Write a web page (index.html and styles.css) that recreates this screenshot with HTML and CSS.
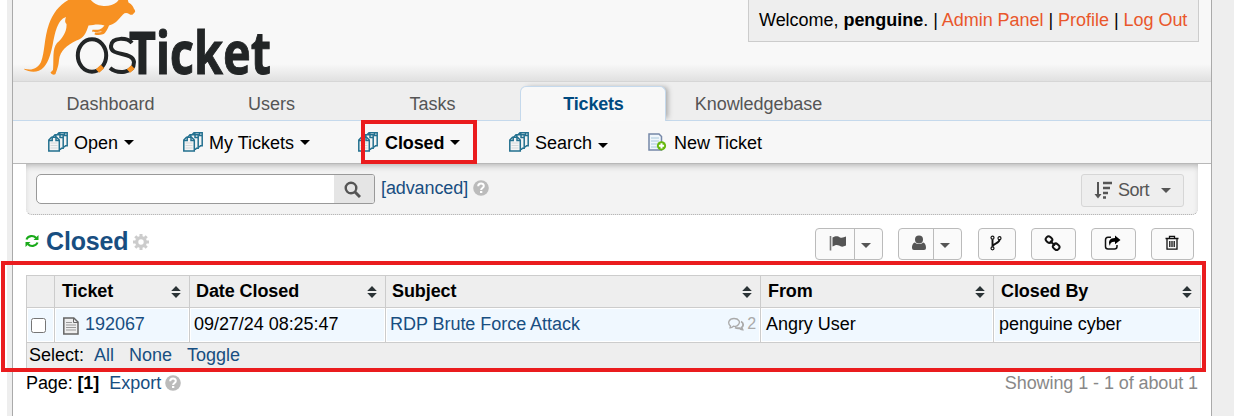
FILE: index.html
```
<!DOCTYPE html>
<html lang="en">
<head>
<meta charset="utf-8">
<title>osTicket :: Closed</title>
<link rel="stylesheet" href="styles.css">
</head>
<body>
<svg class="defs" width="0" height="0" aria-hidden="true">
  <symbol id="queue" viewBox="0 0 20 20">
    <g stroke="#23708f" stroke-width="1.500" fill="#f4f4f4">
      <path d="M11 .8h8.200v13h-1.700l-1 1H8.500V3.300z"/><path d="M11.800 1v2.500H9M16.500 1v2.500H19" fill="none"/>
      <path d="M7 2.800h8.200v13.500h-1.700l-1 1H4.500V5.500z"/><path d="M7.800 3v3H5M12 3v2.500h3" fill="none"/>
      <path d="M3.500 5.300h5L11.300 8v11H.8V8z"/><path d="M4.200 5.500v3H1M8 5.500v3h3" fill="none"/>
    </g>
    <path d="M2.500 11h7M2.500 13.500h7M2.500 16h7" stroke="#d4d8da"/>
  </symbol>
  <symbol id="help" viewBox="0 0 16 16"><circle cx="8" cy="8" r="7.8" fill="#bbb"/><path d="M5.200 6.200c0-3.700 5.800-3.500 5.600-.2 0 2-2.600 2-2.700 4" fill="none" stroke="#fff" stroke-width="2"/><path d="M7 11h2.300v2H7z" fill="#fff"/></symbol>
  <symbol id="sorter" viewBox="0 0 10 12"><path d="M5 0l4.800 5H.2zM5 12l4.800-5H.2z" fill="#2b3336"/></symbol>
  <symbol id="caret" viewBox="0 0 10 5"><path d="M0 0h10L5 5z" fill="currentColor"/></symbol>
</svg>
<div class="page">
  <header class="header">
    <svg class="logo" width="250" height="78" viewBox="0 0 250 78">
      <path fill="#f79122" d="M.3 68.700C7 70.500 13 69.500 17 62C21 52 20 38 25 24C29 13 35 5 46-1L66-1C69 3 73 5.500 78 5.800C84 6.500 89 5 93 2L97-3L103-3L104.500 2.500C108 4.500 109.500 7 110 9C112 11 111 12.500 110 13C109 15 107 15.200 105.500 14.300C103 12.700 101 12.500 99 14.500C93 21 91 24 85 25.500C84 28 82 33 79 34.300C76 35.300 73 35.300 70.500 34.500L71 32.500L76.500 32.300L78 31C74 32.500 70 32 68 31.500L68.500 29.800L74 29.800C78 29 79 27 80.500 25.500C75 23.500 69 25 64.500 25.500C62 33 60 38 52.500 40.500C43 45 36 51 35 60C34.500 66 33.500 68 31.500 74C30 75.500 27.500 74.500 26.500 72.500L29 70C30 59 28 49 33 43C39 38 43 31 42.500 24C40.500 22 41 20 42 17C33 20 31 34 29 43C27 53 25 61 20 67C14 74 5 72 .3 69.500z"/>
      <g fill="none" stroke="#222526" stroke-width="4">
        <ellipse cx="68" cy="55.500" rx="14.200" ry="16.200"/>
        <path d="M108 43C104 38 88 36 87 46C86 57 109 51 110 62C110 74 93 74 86 68"/>
      </g>
      <path d="M73.500 71l5-4.500M104.500 71l4.500-4" stroke="#f79122" stroke-width="5"/>
      <text class="wordmark" x="105" y="73.500" textLength="142" lengthAdjust="spacingAndGlyphs">Ticket</text>
    </svg>
    <p class="welcome">Welcome, <strong>penguine</strong>. | <a>Admin Panel</a> | <a>Profile</a> | <a>Log Out</a></p>
  </header>
  <nav class="tabs"><a>Dashboard</a><a>Users</a><a>Tasks</a><a class="active">Tickets</a><a class="wide">Knowledgebase</a></nav>
  <nav class="subnav">
    <a><svg class="qi"><use href="#queue"/></svg><span>Open</span><svg class="caret"><use href="#caret"/></svg></a>
    <a><svg class="qi"><use href="#queue"/></svg><span>My Tickets</span><svg class="caret"><use href="#caret"/></svg></a>
    <a class="current"><svg class="qi"><use href="#queue"/></svg><span>Closed</span><svg class="caret"><use href="#caret"/></svg><i class="mark-queue"></i></a>
    <a><svg class="qi"><use href="#queue"/></svg><span>Search</span><svg class="caret low"><use href="#caret"/></svg></a>
    <a><svg class="qi" viewBox="0 0 20 20"><path d="M1 2h10l2.500 2.500V18H1z" fill="#eff6fb" stroke="#7688a8" stroke-width="1.500"/><path d="M3 6h8M3 9h8M3 12h7M3 15h6" stroke="#a8c8dc"/><circle cx="13.500" cy="13.800" r="4.600" fill="#65b80b"/><path d="M13.500 11.200v5.200M10.900 13.800h5.200" stroke="#fff" stroke-width="2"/></svg><span>New Ticket</span></a>
  </nav>
  <main>
    <section class="searchbar">
      <div class="search"><span class="field"></span><button class="go" aria-label="Search"><svg width="17" height="17" viewBox="0 0 17 17" fill="none" stroke="#555"><circle cx="7" cy="7" r="5.300" stroke-width="2.400"/><path d="M11 11l5 5" stroke-width="3"/></svg></button></div>
      <a class="advanced">[advanced]</a><svg class="help"><use href="#help"/></svg>
      <button class="sort"><svg width="18" height="18" viewBox="0 0 18 18" fill="none" stroke="#555"><path d="M4 1v14" stroke-width="2"/><path d="M.5 13h7L4 17.500z" fill="#555" stroke="none"/><path d="M9 2h9M9 7h7M9 12h5M9 16.500h3" stroke-width="2.600"/></svg><span>Sort</span><svg class="caret"><use href="#caret"/></svg></button>
    </section>
    <section class="titlebar">
      <svg class="refresh" width="14" height="14" viewBox="0 0 14 14" fill="none" stroke="#1aaa1a" stroke-width="2.100"><path d="M1.500 5.500C3 1.500 8.500 1 11.200 4M12.500 8.500C11 12.500 5.500 13 2.800 10"/><path d="M13.500 1v5h-5zM.5 13V8h5z" fill="#1aaa1a" stroke="none"/></svg>
      <h1>Closed</h1>
      <svg class="gear" width="16" height="16" viewBox="0 0 16 16"><g fill="none" stroke="#ccc"><circle cx="8" cy="8" r="4.300" stroke-width="3.200"/><path d="M8 0v3M8 13v3M0 8h3M13 8h3M2.300 2.300l2 2M11.700 11.700l2 2M2.300 13.700l2-2M11.700 4.300l2-2" stroke-width="3"/></g></svg>
      <div class="actions">
        <button class="split b1"><span><svg width="18" height="16" viewBox="0 0 18 16"><path d="M1.500 1v14.500" stroke="#777" stroke-width="1.600"/><path d="M3.500 2.500C7 .5 9 1 11 2.500C13 3 15 2.500 17 1.500V10.500C14 12 12 12 10 10.500C8 9.500 6 10 3.500 11.500z" fill="#555"/></svg></span><span><svg class="caret"><use href="#caret"/></svg></span></button>
        <button class="split b2"><span><svg width="14" height="16" viewBox="0 0 14 16" fill="#555"><circle cx="7" cy="4.500" r="4"/><path d="M3 7.500C5 9.500 9 9.500 11 7.500C13.500 8 14 11 14 13Q14 15 12 15H2Q0 15 0 13C0 11 .5 8 3 7.500z"/></svg></span><span><svg class="caret"><use href="#caret"/></svg></span></button>
        <button class="b3"><svg width="12" height="16" viewBox="0 0 12 16" fill="none" stroke="#111" stroke-width="1.200"><circle cx="2.500" cy="2.700" r="1.500"/><circle cx="9.500" cy="3.200" r="1.500"/><circle cx="2.500" cy="13.300" r="1.500"/><path d="M2.500 4.200v7.500M9.500 4.800C9.500 8.500 3 8 2.700 11.500" stroke-width="1.900"/></svg></button>
        <button class="b4"><svg width="17" height="16" viewBox="0 0 17 16" fill="none" stroke="#111" stroke-width="2"><rect x="1.800" y="1.600" width="6.500" height="5.600" rx="2.500" transform="rotate(42 4.800 4.400)"/><rect x="9" y="8.800" width="6.500" height="5.600" rx="2.500" transform="rotate(42 12 11.600)"/><path d="M6 6l5 4.500"/></svg></button>
        <button class="b5"><svg width="17" height="16" viewBox="0 0 17 16"><path d="M7 2.200H4Q1.500 2.200 1.500 5v6.500Q1.500 14 4 14h6.500Q13 14 13 11.500V10" fill="none" stroke="#111" stroke-width="1.500"/><path d="M11 .5l5.500 4.500L11 9.300V6.800C8 6.500 6 7.500 6 11C3.500 6.500 6 3 11 3z" fill="#000"/></svg></button>
        <button class="b6"><svg width="14" height="16" viewBox="0 0 14 16" fill="none" stroke="#111" stroke-width="1.300"><path d="M.5 3.500h13M4.500 3V1.300h5V3M2 3.500v10.700h10V3.500M4.800 6v6M7 6v6M9.200 6v6"/></svg></button>
      </div>
    </section>
    <section class="table">
      <div class="row head">
        <span></span>
        <span>Ticket<svg class="sorter"><use href="#sorter"/></svg></span>
        <span>Date Closed<svg class="sorter"><use href="#sorter"/></svg></span>
        <span>Subject<svg class="sorter"><use href="#sorter"/></svg></span>
        <span>From<svg class="sorter"><use href="#sorter"/></svg></span>
        <span>Closed By<svg class="sorter"><use href="#sorter"/></svg></span>
      </div>
      <div class="row data">
        <span><input type="checkbox"></span>
        <span><svg class="doc" width="16" height="18" viewBox="0 0 16 18"><path d="M.8 1h10L15 5v12H.8z" fill="#eee" stroke="#666" stroke-width="1.500"/><path d="M10.500 1v4.500H15" fill="none" stroke="#666"/><path d="M3 5.500h6M3 8h10M3 10.500h10M3 13h10" stroke="#999"/></svg><a>192067</a></span>
        <span>09/27/24 08:25:47</span>
        <span><a>RDP Brute Force Attack</a><small><svg width="16" height="14" viewBox="0 0 16 14" fill="none" stroke="#aaa" stroke-width="1.300"><path d="M2.500 9C-1 6 1 1.500 6 1.500S12.500 5 10.500 7.500S6 9.500 5.500 9.200Q4 10.800 2 10.800z"/><path d="M13 4.500C16 6 15.500 9.500 13.500 10.500L14.500 12.500Q12.500 12.500 11.500 11.200Q8.500 11.500 7 10.500" stroke-width="1.800"/></svg>2</small></span>
        <span>Angry User</span>
        <span>penguine cyber</span>
      </div>
      <div class="foot"><span>Select:</span><a>All</a><a>None</a><a>Toggle</a></div>
      <i class="mark-table"></i>
    </section>
    <footer class="pager"><span>Page: <strong>[1]</strong></span><a>Export</a><svg class="help"><use href="#help"/></svg><span class="showing">Showing 1 - 1 of about 1</span></footer>
  </main>
</div>
</body>
</html>
```
FILE: styles.css
```
* { box-sizing: border-box; }
body { margin: 0; height: 416px; overflow: hidden; padding: 0 22px 0 7px; background: linear-gradient(90deg, #fff 7px, #eee 7px); font: 18px/20px "Liberation Sans", Arial, sans-serif; color: #000; }
svg { display: block; flex: none; }
.defs { position: absolute; }
a { color: #184e81; white-space: nowrap; }
button { font: inherit; padding: 0; }
.page { width: 1200px; height: 416px; margin-left: 5px; border: solid #aaa; border-width: 0 1px; background: #fff; }
.header { height: 82px; display: flex; justify-content: space-between; border-bottom: 1px solid #d6d6d6; background: linear-gradient(#f8f8f8 64px, #dfdfdf 82px); }
.logo { margin-left: 11px; overflow: visible; }
.wordmark { font: 700 60px "Noto Sans", sans-serif; fill: #222526; stroke: #222526; stroke-width: 1px; }
.welcome { margin: 0 12px 0 0; height: 42px; width: 451px; padding: 10px 0 0 10px; border: 1px solid #ccc; border-top: 0; background: #eee; white-space: nowrap; letter-spacing: -.03px; }
.welcome a { color: #e9572b; }
.tabs { height: 39px; padding: 4px 24px 0; display: flex; gap: 15px; background: #eee; border-bottom: 1px solid #c5d9ec; }
.tabs a { width: 146px; height: 35px; padding: 8px 0 0 1px; text-align: center; color: #555; }
.tabs .wide { width: 154px; letter-spacing: -.05px; }
.tabs .active { height: 35px; border: 1px solid #c5d9ec; border-bottom: 0; border-radius: 6px 6px 0 0; background: #f8f8f8; box-shadow: 4px -1px 5px -2px #aaa; color: #004a80; font-weight: bold; letter-spacing: -.2px; clip-path: inset(-8px -8px 0); padding-top: 7px; }
.subnav { height: 43px; padding: 0 0 0 35px; display: grid; grid-template-columns: 135px 175px 151px 139px auto; align-items: center; background: #f7f7f7; border-bottom: 1px solid #b8b8b8; }
.subnav a { display: flex; align-items: center; color: #000; position: relative; }
.subnav .current { font-weight: bold; letter-spacing: -.1px; }
.subnav span { margin: 2px 6px 0; }
.subnav .current span { margin-left: 7px; }
.qi { width: 20px; height: 20px; }
.caret { width: 10px; height: 5px; }
.subnav .caret { margin-top: 1px; }
.subnav .low { margin-top: 6px; }
.mark-queue { position: absolute; left: 3px; top: -11px; width: 116px; height: 44px; border: 4px solid #ea1c1e; }
main { padding: 0 13px; }
.searchbar { height: 51px; display: flex; align-items: flex-start; padding: 10px 14px 0 10px; background: #f3f3f3; border-bottom: 1px dotted #aaa; border-radius: 0 0 6px 6px; box-shadow: inset 0 4px 7px -3px #aaa; }
.search { display: flex; width: 339px; height: 30px; border: 1px solid #999; border-radius: 5px 3px 3px 5px; background: #fff; overflow: hidden; }
.field { flex: 1; }
.go { width: 40px; border: 0; background: #e5e5e5; display: grid; place-items: center; padding-right: 3px; }
.advanced { margin: 4px 5px 0 6px; letter-spacing: -.1px; }
.help { width: 16px; height: 16px; }
.searchbar .help { margin-top: 6px; }
.sort { margin-left: auto; width: 103px; height: 33px; display: flex; align-items: center; padding: 0 0 2px 12px; border: 1px solid #d6d6d6; border-radius: 3px; background: #eee; color: #555; }
.sort span { margin: 0 12px 0 6px; letter-spacing: -.5px; }
.sort .caret { margin-top: 2px; }
.titlebar { height: 60px; display: flex; align-items: flex-start; }
.refresh { margin: 19px 7px 0 -1px; }
h1 { margin: 13px 5px 0 0; font-size: 25px; line-height: 26px; color: #184e81; letter-spacing: -.15px; }
.gear { margin-top: 19px; }
.actions { display: flex; margin: 13px 4px 0 auto; }
.actions button { height: 32px; border: 1px solid #bbb; border-radius: 4px; background: #fafafa; display: flex; align-items: center; justify-content: center; padding: 0 2px 3px 0; color: #555; }
.actions .split { padding: 0; }
.split span { height: 100%; display: flex; align-items: center; justify-content: center; padding-bottom: 3px; }
.split span:first-child { flex: 1; padding-left: 5px; border-right: 1px solid #bbb; }
.split span:last-child { width: 27px; padding: 3px 5px 0 0; }
.b1 { width: 68px; margin-right: 15px; }
.b2 { width: 64px; margin-right: 16px; }
.b3 { width: 38px; margin-right: 15px; }
.b4 { width: 45px; margin-right: 15px; }
.b5 { width: 45px; margin-right: 15px; }
.b6 { width: 43px; }
.table { position: relative; width: 1175px; height: 95px; border: solid #ccc; border-width: 0 1px 0 0; background: #eee; }
.row { display: grid; grid-template-columns: 28px 135px 196px 375px 233px 207px; border-top: 1px solid #ccc; }
.row > span { border-left: 1px solid #ccc; display: flex; align-items: center; white-space: nowrap; }
.head { height: 32px; font-weight: bold; }
.head > span { padding: 0 8px 2px 6px; letter-spacing: -.08px; }
.head > span:nth-child(2) { padding-left: 7px; }
.head > span:nth-child(n+5) { padding-left: 7px; }
.sorter { width: 10px; height: 12px; margin: 2px 0 0 auto; }
.data { height: 35px; }
.data > span { padding: 0 4px 2px 5px; background: #f0f8ff; box-shadow: inset 0 0 0 1px #fff; letter-spacing: -.04px; }
.data > span:nth-child(1) { padding-left: 4px; }
.data > span:nth-child(2) { padding-left: 8px; }
.data > span:nth-child(3), .data > span:nth-child(4) { padding-left: 4px; }
.data input { width: 15px; height: 15px; margin: 2px 0 0; }
.doc { margin: 3px 6px 0 0; }
small { margin-left: auto; display: flex; align-items: center; gap: 3px; font-size: 16px; color: #aaa; }
.foot { height: 28px; display: flex; padding: 2px 0 0 2px; border: solid #ccc; border-width: 1px 0 0 1px; }
.foot span { margin-right: 10px; }
.foot a { margin-right: 15px; }
.mark-table { position: absolute; left: -25px; top: -14px; width: 1205px; height: 111px; border: 4px solid #ea1c1e; }
.pager { display: flex; padding-top: 3px; align-items: center; }
.pager > span:first-child { letter-spacing: -.1px; }
.pager a { margin: 0 4px 0 10px; }
.showing { margin-left: auto; color: #888; letter-spacing: -.08px; }
```
